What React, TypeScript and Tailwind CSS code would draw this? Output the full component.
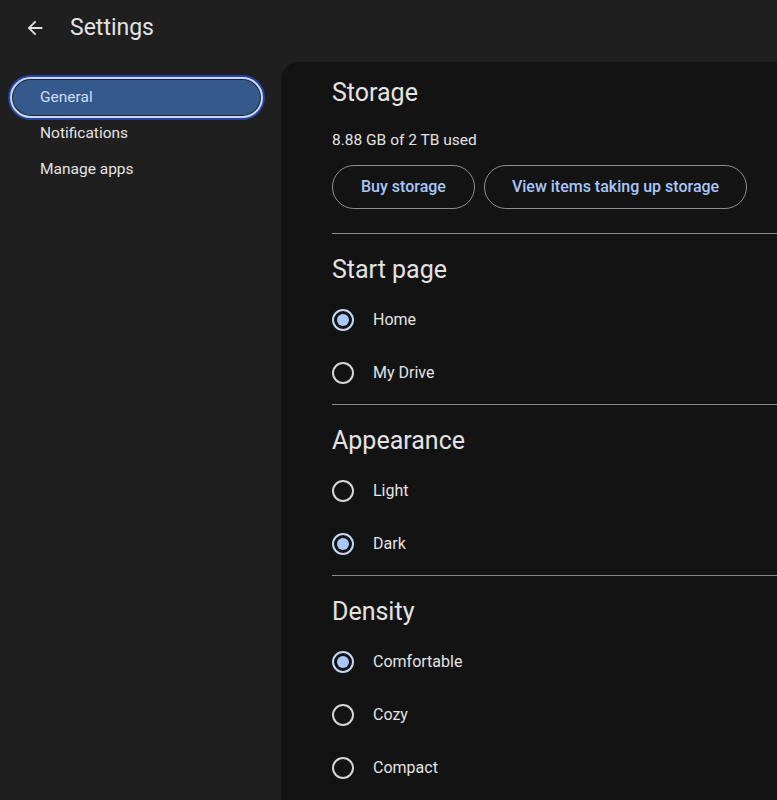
import { useState } from "react";

type Option = { id: string; label: string };

function Radio({
  checked,
  label,
  onSelect,
}: {
  checked: boolean;
  label: string;
  onSelect: () => void;
}) {
  return (
    <button
      onClick={onSelect}
      className="flex items-center h-[53px] w-full text-left"
    >
      <span
        className={`flex items-center justify-center w-[22px] h-[22px] rounded-full border-2 ${
          checked ? "border-[#c4d7f7]" : "border-[#d6d6d6]"
        }`}
      >
        {checked && <span className="w-[12px] h-[12px] rounded-full bg-[#a8c7fa]" />}
      </span>
      <span className="ml-[19px] text-[16px] text-[#e3e3e3]">{label}</span>
    </button>
  );
}

function Section({
  title,
  options,
  value,
  onChange,
  last,
}: {
  title: string;
  options: Option[];
  value: string;
  onChange: (v: string) => void;
  last?: boolean;
}) {
  return (
    <div className={last ? "" : "border-b border-[#8a8a8a] pb-[5px]"}>
      <h2 className="pt-[18px] pb-[5px] text-[25px] leading-[36px] text-[#e3e3e3]">
        {title}
      </h2>
      {options.map((o) => (
        <Radio
          key={o.id}
          label={o.label}
          checked={value === o.id}
          onSelect={() => onChange(o.id)}
        />
      ))}
    </div>
  );
}

export default function App() {
  const [startPage, setStartPage] = useState("home");
  const [theme, setTheme] = useState("dark");
  const [density, setDensity] = useState("comfortable");
  const [tab, setTab] = useState("general");

  const tabs = [
    { id: "general", label: "General" },
    { id: "notifications", label: "Notifications" },
    { id: "apps", label: "Manage apps" },
  ];

  return (
    <div
      className="w-[777px] h-[800px] overflow-hidden bg-[#1f1f1f] flex flex-col"
      style={{ fontFamily: "Roboto, 'Open Sans', sans-serif" }}
    >
      <header className="flex items-center h-[56px] pl-[24px] shrink-0">
        <svg width="22" height="22" viewBox="0 0 24 24" className="text-[#e3e3e3]">
          <path
            d="M20 11H7.83l5.59-5.59L12 4l-8 8 8 8 1.41-1.41L7.83 13H20v-2z"
            fill="currentColor"
          />
        </svg>
        <span className="ml-[24px] text-[23px] text-[#e3e3e3]">Settings</span>
      </header>

      <div className="flex flex-1 pt-[6px] min-h-0">
        <nav className="w-[281px] shrink-0 pl-[10px] pr-[17px] pt-[15px]">
          {tabs.map((t) =>
            tab === t.id ? (
              <button
                key={t.id}
                onClick={() => setTab(t.id)}
                className="w-[253px] h-[41px] mb-[-2px] rounded-full bg-[#34598a] border-2 border-[#c6d6f3] ring-2 ring-[#2443a3] shadow-[inset_0_0_0_1px_#1a2232] text-left pl-[28px] text-[15.5px] text-[#c9ddfb]"
              >
                {t.label}
              </button>
            ) : (
              <button
                key={t.id}
                onClick={() => setTab(t.id)}
                className="block w-full h-[36px] text-left pl-[30px] text-[15.5px] text-[#e3e3e3]"
              >
                {t.label}
              </button>
            )
          )}
        </nav>

        <main className="flex-1 bg-[#131313] rounded-tl-[18px] pl-[51px]">
          <div className="pt-[14px] pb-[24px] border-b border-[#8a8a8a]">
            <h2 className="text-[25px] leading-[34px] text-[#e3e3e3]">Storage</h2>
            <p className="mt-[19px] text-[15.5px] text-[#e3e3e3]">8.88 GB of 2 TB used</p>
            <div className="flex gap-[9px] mt-[13px]">
              <button className="h-[44px] px-[28px] rounded-full border border-[#8e8e8e] text-[16px] font-medium text-[#a8c7fa]">
                Buy storage
              </button>
              <button className="h-[44px] px-[27px] rounded-full border border-[#8e8e8e] text-[16px] font-medium text-[#a8c7fa]">
                View items taking up storage
              </button>
            </div>
          </div>

          <Section
            title="Start page"
            value={startPage}
            onChange={setStartPage}
            options={[
              { id: "home", label: "Home" },
              { id: "drive", label: "My Drive" },
            ]}
          />
          <Section
            title="Appearance"
            value={theme}
            onChange={setTheme}
            options={[
              { id: "light", label: "Light" },
              { id: "dark", label: "Dark" },
            ]}
          />
          <Section
            title="Density"
            value={density}
            onChange={setDensity}
            last
            options={[
              { id: "comfortable", label: "Comfortable" },
              { id: "cozy", label: "Cozy" },
              { id: "compact", label: "Compact" },
            ]}
          />
        </main>
      </div>
    </div>
  );
}
